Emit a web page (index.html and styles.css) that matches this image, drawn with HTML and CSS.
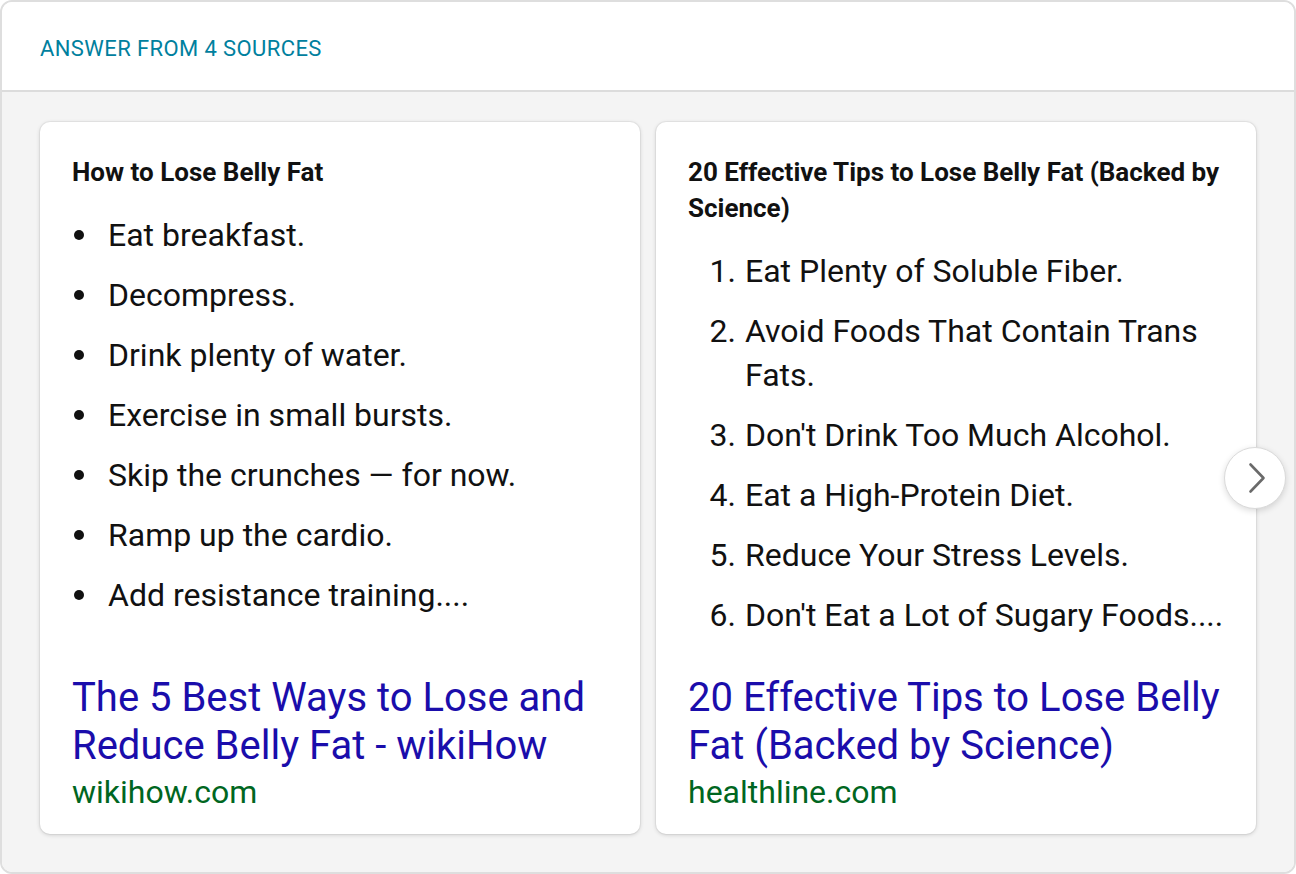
FILE: index.html
```html
<!DOCTYPE html>
<html>
<head>
<meta charset="utf-8">
<link rel="stylesheet" href="styles.css">
</head>
<body>
<div class="answer">
  <div class="answer-head">ANSWER FROM 4 SOURCES</div>
  <div class="answer-body">
    <div class="cards">
      <div class="card">
        <div class="card-title">How to Lose Belly Fat</div>
        <ul class="list bullets">
          <li>Eat breakfast.</li>
          <li>Decompress.</li>
          <li>Drink plenty of water.</li>
          <li>Exercise in small bursts.</li>
          <li>Skip the crunches — for now.</li>
          <li>Ramp up the cardio.</li>
          <li>Add resistance training....</li>
        </ul>
        <div class="source">
          <a class="source-title" href="#">The 5 Best Ways to Lose and Reduce Belly Fat - wikiHow</a>
          <div class="source-domain">wikihow.com</div>
        </div>
      </div>
      <div class="card">
        <div class="card-title">20 Effective Tips to Lose Belly Fat (Backed by Science)</div>
        <ol class="list numbers">
          <li>Eat Plenty of Soluble Fiber.</li>
          <li>Avoid Foods That Contain Trans Fats.</li>
          <li>Don't Drink Too Much Alcohol.</li>
          <li>Eat a High-Protein Diet.</li>
          <li>Reduce Your Stress Levels.</li>
          <li>Don't Eat a Lot of Sugary Foods....</li>
        </ol>
        <div class="source">
          <a class="source-title" href="#">20 Effective Tips to Lose Belly Fat (Backed by Science)</a>
          <div class="source-domain">healthline.com</div>
        </div>
      </div>
    </div>
    <button class="next-btn" aria-label="Next">
      <svg width="20" height="32" viewBox="0 0 20 32"><path d="M3.5 2.5 L16.5 16 L3.5 29.5" fill="none" stroke="#6a6a6a" stroke-width="2.6" stroke-linecap="round" stroke-linejoin="round"/></svg>
    </button>
  </div>
</div>
</body>
</html>
```

FILE: styles.css
```css
*, *::before, *::after { box-sizing: border-box; }
html, body { margin: 0; padding: 0; background: #fff; }
body { font-family: Roboto, "Noto Sans", Arial, sans-serif; }

.answer {
  width: 1296px;
  height: 874px;
  border: 2px solid #dedede;
  border-radius: 12px;
  overflow: hidden;
  display: flex;
  flex-direction: column;
}
.answer-head {
  height: 90px;
  flex: none;
  padding: 5px 38px 0;
  display: flex;
  align-items: center;
  color: #00809e;
  font-size: 22px;
  letter-spacing: 0.4px;
  border-bottom: 2px solid #dcdcdc;
  background: #fff;
}
.answer-body {
  flex: 1;
  background: #f4f4f4;
  padding: 30px 38px 38px;
  position: relative;
}
.cards {
  display: grid;
  grid-template-columns: 600px 600px;
  grid-template-rows: 712px;
  gap: 16px;
}
.card {
  background: #fff;
  border-radius: 10px;
  box-shadow: 0 1px 4px rgba(0,0,0,0.16), 0 0 0 1px rgba(0,0,0,0.04);
  padding: 32px 32px 20px;
  display: flex;
  flex-direction: column;
  min-height: 0;
}
.card-title {
  font-weight: 700;
  font-size: 26px;
  line-height: 36px;
  color: #111;
}
.list {
  list-style: none;
  margin: 23px 0 0;
  padding: 0;
  font-size: 32px;
  line-height: 44px;
  color: #111;
}
.list li {
  display: flex;
  margin-bottom: 16px;
}
.list li:last-child { margin-bottom: 0; }
.bullets li::before {
  content: "";
  flex: none;
  width: 10px;
  height: 10px;
  border-radius: 50%;
  background: #111;
  margin: 17px 24px 0 2px;
}
.numbers { counter-reset: item; }
.numbers li { counter-increment: item; }
.numbers li::before {
  content: counter(item) ".";
  flex: none;
  width: 57px;
  text-align: right;
  padding-right: 9px;
}
.source {
  margin-top: auto;
}
.source-title {
  display: block;
  font-size: 40px;
  line-height: 48px;
  color: #1a0dab;
  text-decoration: none;
}
.source-domain {
  font-size: 32px;
  line-height: 44px;
  color: #006621;
}
.next-btn {
  position: absolute;
  right: 8px;
  top: 355px;
  width: 62px;
  height: 62px;
  border-radius: 50%;
  background: #fff;
  border: 1px solid #dadada;
  box-shadow: 0 2px 6px rgba(0,0,0,0.14);
  display: flex;
  align-items: center;
  justify-content: center;
  padding: 0 0 0 4px;
  cursor: pointer;
}
```
